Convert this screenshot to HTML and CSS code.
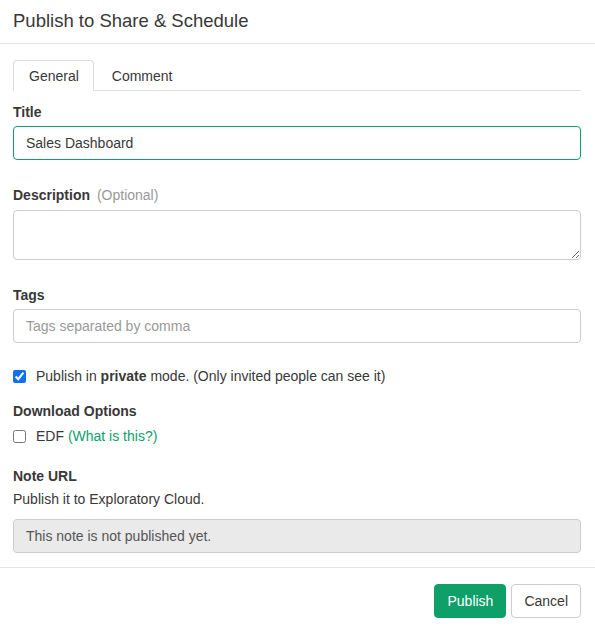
FILE: index.html
```html
<!DOCTYPE html>
<html>
<head>
<meta charset="utf-8">
<link rel="stylesheet" href="styles.css">
</head>
<body>
<div class="modal">
  <div class="modal-header">
    <h4 class="modal-title">Publish to Share &amp; Schedule</h4>
  </div>
  <div class="modal-body">
    <ul class="tabs">
      <li class="tab active"><span>General</span></li>
      <li class="tab"><span>Comment</span></li>
    </ul>
    <label class="lbl lbl-title">Title</label>
    <input class="field field-focus" type="text" value="Sales Dashboard">
    <label class="lbl lbl-gap">Description <span class="muted">(Optional)</span></label>
    <textarea class="field area"></textarea>
    <label class="lbl lbl-gap lbl-tags">Tags</label>
    <input class="field" type="text" placeholder="Tags separated by comma">
    <div class="check-row check-private">
      <input type="checkbox" class="cb" checked>
      <span>Publish in <b>private</b> mode. (Only invited people can see it)</span>
    </div>
    <div class="lbl lbl-download">Download Options</div>
    <div class="check-row check-edf">
      <input type="checkbox" class="cb">
      <span>EDF <a class="link">(What is this?)</a></span>
    </div>
    <div class="lbl lbl-note">Note URL</div>
    <p class="note-text">Publish it to Exploratory Cloud.</p>
    <div class="readonly">This note is not published yet.</div>
  </div>
  <div class="modal-footer">
    <button class="btn btn-primary">Publish</button>
    <button class="btn btn-default">Cancel</button>
  </div>
</div>
</body>
</html>
```

FILE: styles.css
```css
* { box-sizing: border-box; }
html, body {
  margin: 0;
  padding: 0;
  background: #fff;
}
body {
  font-family: "Liberation Sans", Arial, sans-serif;
  font-size: 14px;
  line-height: 20px;
  color: #383838;
}
.modal {
  width: 595px;
}
.modal-header {
  padding: 9px 13px 10px;
  border-bottom: 1px solid #e5e5e5;
}
.modal-title {
  margin: 0;
  font-size: 18.5px;
  font-weight: normal;
  line-height: 24px;
  color: #383838;
}
.modal-body {
  padding: 16px 14px 14px 13px;
}
.tabs {
  list-style: none;
  margin: 0;
  padding: 0;
  display: flex;
  border-bottom: 1px solid #ddd;
}
.tab {
  margin-right: 2px;
  margin-bottom: -1px;
  padding: 5px 14px 4px 15px;
  border: 1px solid transparent;
  border-radius: 4px 4px 0 0;
}
.tab.active {
  border-color: #ddd #ddd transparent;
  background: #fff;
}
.lbl {
  display: block;
  font-weight: bold;
  line-height: 20px;
  margin-bottom: 4px;
}
.lbl-title { margin-top: 11px; }
.lbl-gap { margin-top: 25px; margin-bottom: 5px; }
.lbl-tags { margin-bottom: 4px; }
.muted {
  font-weight: normal;
  color: #999;
  margin-left: 3px;
}
.field {
  display: block;
  width: 100%;
  height: 34px;
  margin: 0;
  padding: 6px 12px;
  font-family: "Liberation Sans", Arial, sans-serif;
  font-size: 14px;
  line-height: 20px;
  color: #383838;
  background: #fff;
  border: 1px solid #ccc;
  border-radius: 4px;
  outline: none;
}
.field::placeholder { color: #999; }
.field-focus { border-color: #0fa06a; }
.area {
  height: 50px;
  resize: vertical;
}
.check-row {
  display: flex;
  align-items: center;
  line-height: 20px;
}
.cb {
  width: 13px;
  height: 13px;
  margin: 0 10px 0 0;
  accent-color: #0f6ff5;
}
.check-private { margin-top: 23px; }
.lbl-download { margin-top: 15px; margin-bottom: 0; }
.check-edf { margin-top: 5px; }
.link {
  color: #0fa06a;
  text-decoration: none;
}
.lbl-note { margin-top: 20px; margin-bottom: 0; }
.note-text {
  margin: 3px 0 0;
  line-height: 20px;
}
.readonly {
  margin-top: 10px;
  height: 34px;
  padding: 6px 12px;
  background: #eaeaea;
  border: 1px solid #ccc;
  border-radius: 4px;
  color: #555;
}
.modal-footer {
  border-top: 1px solid #e5e5e5;
  padding: 16px 14px 13px;
  display: flex;
  justify-content: flex-end;
  gap: 5px;
}
.btn {
  height: 34px;
  padding: 6px 12px;
  font-family: "Liberation Sans", Arial, sans-serif;
  font-size: 14px;
  line-height: 20px;
  border: 1px solid #ccc;
  border-radius: 4px;
  background: #fff;
  color: #383838;
}
.btn-primary {
  background: #0fa06a;
  border-color: #0fa06a;
  color: #fff;
}
```
